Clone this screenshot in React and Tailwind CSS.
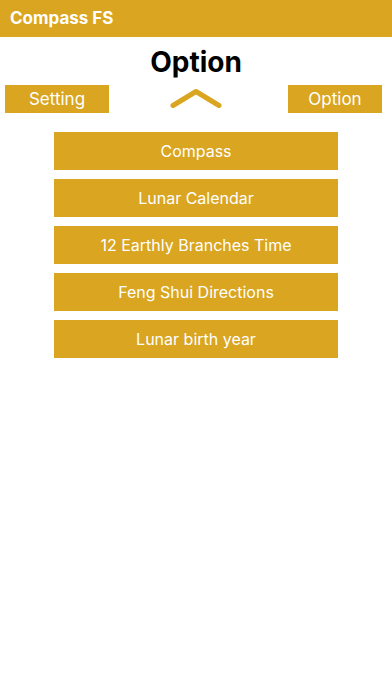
import React from 'react';

const items = ['Compass', 'Lunar Calendar', '12 Earthly Branches Time', 'Feng Shui Directions', 'Lunar birth year'];

const App = () => {
  return (
    <div className="w-full min-h-[696px] bg-white font-['Inter',sans-serif]">
      {/* top bar */}
      <div className="h-[37px] bg-[#daa520] flex items-center pl-[10px]">
        <span className="text-white text-[17px] font-bold">Compass FS</span>
      </div>

      <h1 className="mt-[8px] text-center text-[28px] leading-[34px] font-bold text-black">Option</h1>

      {/* Setting / chevron / Option */}
      <div className="mt-[6px] px-[5px] grid grid-cols-[1fr_auto_1fr] items-center">
        <div className="flex">
          <button className="w-[104px] h-[28px] bg-[#daa520] text-white text-[17px] leading-none">Setting</button>
        </div>
        <svg width="52" height="28" viewBox="0 0 52 28" fill="none">
          <path d="M3 20.5 L26 6.5 L49 20.5" stroke="#daa520" strokeWidth="5" strokeLinecap="round" strokeLinejoin="round" />
        </svg>
        <div className="flex justify-end">
          <button className="mr-[5px] w-[94px] h-[28px] bg-[#daa520] text-white text-[17px] leading-none">Option</button>
        </div>
      </div>

      {/* menu */}
      <div className="mt-[19px] flex flex-col items-center gap-[9px]">
        {items.map((label) => (
          <button key={label} className="w-[284px] h-[38px] bg-[#daa520] text-white text-[16px] leading-none">
            {label}
          </button>
        ))}
      </div>
    </div>
  );
};

export default App;
